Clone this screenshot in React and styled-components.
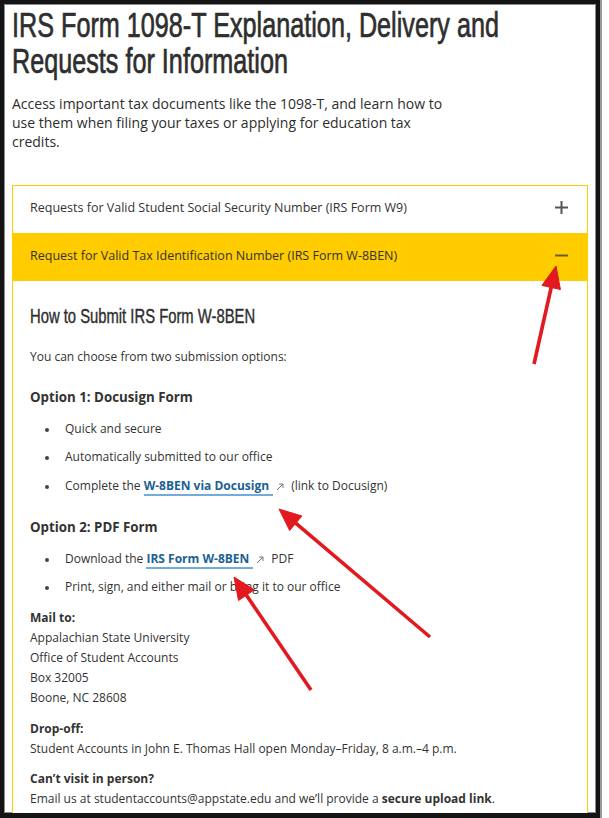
import React from "react";
import styled, { createGlobalStyle } from "styled-components";

const GlobalStyle = createGlobalStyle`
  body {
    margin: 0;
    background: #fff;
  }
`;

const Frame = styled.div`
  position: relative;
  box-sizing: border-box;
  width: 600px;
  height: 818px;
  padding: 3px 8px 0;
  border: 4px solid #141414;
  border-bottom-width: 5px;
  box-shadow: inset 0 0 0 1px #8c8c8c, 2px 0 0 #9a9a9a;
  overflow: hidden;
  font-family: "Open Sans", "Liberation Sans", sans-serif;
  color: #333;
`;

const Title = styled.h1`
  margin: 0;
  width: 790px;
  font-family: "Liberation Sans", Arial, sans-serif;
  font-weight: 400;
  font-size: 35px;
  line-height: 36px;
  color: #2e2e2e;
  -webkit-text-stroke: 0.7px #2e2e2e;
  transform: scaleX(0.72);
  transform-origin: left top;
`;

const Intro = styled.p`
  margin: 14.5px 0 0;
  max-width: 436px;
  font-size: 14px;
  line-height: 19px;
  color: #2e2e2e;
`;

const Accordion = styled.div`
  margin-top: 34.5px;
`;

const Header = styled.div`
  box-sizing: border-box;
  height: 48px;
  display: flex;
  align-items: center;
  justify-content: space-between;
  padding: 0 19px 4px 17px;
  border: 1px solid #ffcc00;
  border-bottom: none;
  background: ${(p) => (p.$open ? "#ffcc00" : "#fff")};
  font-size: 12.5px;
  line-height: 20px;
  color: #333;
  cursor: pointer;
`;

const Panel = styled.div`
  padding: 23px 17px 40px;
  border: 1px solid #ffcc00;
  border-top: none;
  background: #fff;
  font-size: 12px;
  line-height: 20px;
`;

const PanelTitle = styled.h3`
  margin: 0;
  width: 400px;
  font-family: "Liberation Sans", Arial, sans-serif;
  font-weight: 400;
  font-size: 20px;
  line-height: 24px;
  color: #2e2e2e;
  -webkit-text-stroke: 0.4px #2e2e2e;
  transform: scaleX(0.74);
  transform-origin: left top;
`;

const Text = styled.p`
  margin: ${(p) => p.$top || "10.5px"} 0 0;
`;

const OptionHead = styled.h4`
  margin: ${(p) => p.$top || "19.7px"} 0 0;
  font-size: 13.3px;
  line-height: 20px;
  font-weight: 700;
`;

const List = styled.ul`
  margin: 11.8px 0 0;
  padding-left: 35px;
  list-style: none;
`;

const Item = styled.li`
  & + & {
    margin-top: 8.5px;
  }
  &::before {
    content: "";
    display: inline-block;
    width: 4px;
    height: 4px;
    border-radius: 50%;
    background: #444;
    margin-left: -20px;
    margin-right: 16px;
    vertical-align: middle;
  }
`;

const DocLink = styled.a`
  color: #1c6192;
  font-weight: 700;
  text-decoration: none;
  border-bottom: 2px solid #72acd8;
  padding: 0 4px 0 0;
`;

const Ext = styled.svg`
  width: 8px;
  height: 8px;
  margin: 0 7px 0 3px;
  vertical-align: -1px;
`;

const Overlay = styled.svg`
  position: absolute;
  left: -4px;
  top: -4px;
  width: 600px;
  height: 818px;
  pointer-events: none;
`;

const ExternalIcon = () => (
  <Ext viewBox="0 0 8 8" fill="none" stroke="#777" strokeWidth="1">
    <path d="M1 7 L7 1 M3 1 H7 V5" />
  </Ext>
);

const Toggle = ({ open }) => (
  <svg width="13" height="13" viewBox="0 0 13 13">
    <path
      d={open ? "M0 6.5 H13" : "M0 6.5 H13 M6.5 0 V13"}
      stroke={open ? "#6a5e2c" : "#555"}
      strokeWidth="2"
    />
  </svg>
);

// red pointer: shaft plus a filled head at the tip
const Pointer = ({ from, to }) => {
  const [fx, fy] = from;
  const [tx, ty] = to;
  const len = Math.hypot(tx - fx, ty - fy);
  const ux = (tx - fx) / len;
  const uy = (ty - fy) / len;
  const bx = tx - ux * 22;
  const by = ty - uy * 22;
  const w = 9.5;
  const head = [
    [tx, ty],
    [bx - uy * w, by + ux * w],
    [bx + uy * w, by - ux * w],
  ]
    .map((p) => p.join(","))
    .join(" ");
  return (
    <g fill="#e2191f" stroke="#e2191f">
      <line x1={fx} y1={fy} x2={bx + ux * 2} y2={by + uy * 2} strokeWidth="3.6" />
      <polygon points={head} strokeWidth="1" strokeLinejoin="round" />
    </g>
  );
};

export default function App() {
  return (
    <>
      <GlobalStyle />
      <Frame>
        <Title>IRS Form 1098-T Explanation, Delivery and Requests for Information</Title>
        <Intro>
          Access important tax documents like the 1098-T, and learn how to use them
          when filing your taxes or applying for education tax credits.
        </Intro>

        <Accordion>
          <Header>
            <span>Requests for Valid Student Social Security Number (IRS Form W9)</span>
            <Toggle />
          </Header>
          <Header $open>
            <span>Request for Valid Tax Identification Number (IRS Form W-8BEN)</span>
            <Toggle open />
          </Header>
          <Panel>
            <PanelTitle>How to Submit IRS Form W-8BEN</PanelTitle>
            <Text $top="19.3px">You can choose from two submission options:</Text>

            <OptionHead>Option 1: Docusign Form</OptionHead>
            <List>
              <Item>Quick and secure</Item>
              <Item>Automatically submitted to our office</Item>
              <Item>
                Complete the <DocLink href="#">W-8BEN via Docusign</DocLink>
                <ExternalIcon />
                (link to Docusign)
              </Item>
            </List>

            <OptionHead $top="21.2px">Option 2: PDF Form</OptionHead>
            <List>
              <Item>
                Download the <DocLink href="#">IRS Form W-8BEN</DocLink>
                <ExternalIcon />
                PDF
              </Item>
              <Item>Print, sign, and either mail or bring it to our office</Item>
            </List>

            <Text>
              <strong>Mail to:</strong>
              <br />
              Appalachian State University
              <br />
              Office of Student Accounts
              <br />
              Box 32005
              <br />
              Boone, NC 28608
            </Text>
            <Text $top="11px">
              <strong>Drop-off:</strong>
              <br />
              Student Accounts in John E. Thomas Hall open Monday–Friday, 8 a.m.–4 p.m.
            </Text>
            <Text $top="10px">
              <strong>Can’t visit in person?</strong>
              <br />
              Email us at studentaccounts@appstate.edu and we’ll provide a{" "}
              <strong>secure upload link</strong>.
            </Text>
          </Panel>
        </Accordion>

        <Overlay viewBox="0 0 600 818">
          <Pointer from={[534, 364]} to={[556, 266]} />
          <Pointer from={[430, 637]} to={[279, 509]} />
          <Pointer from={[311, 690]} to={[234, 577]} />
        </Overlay>
      </Frame>
    </>
  );
}
